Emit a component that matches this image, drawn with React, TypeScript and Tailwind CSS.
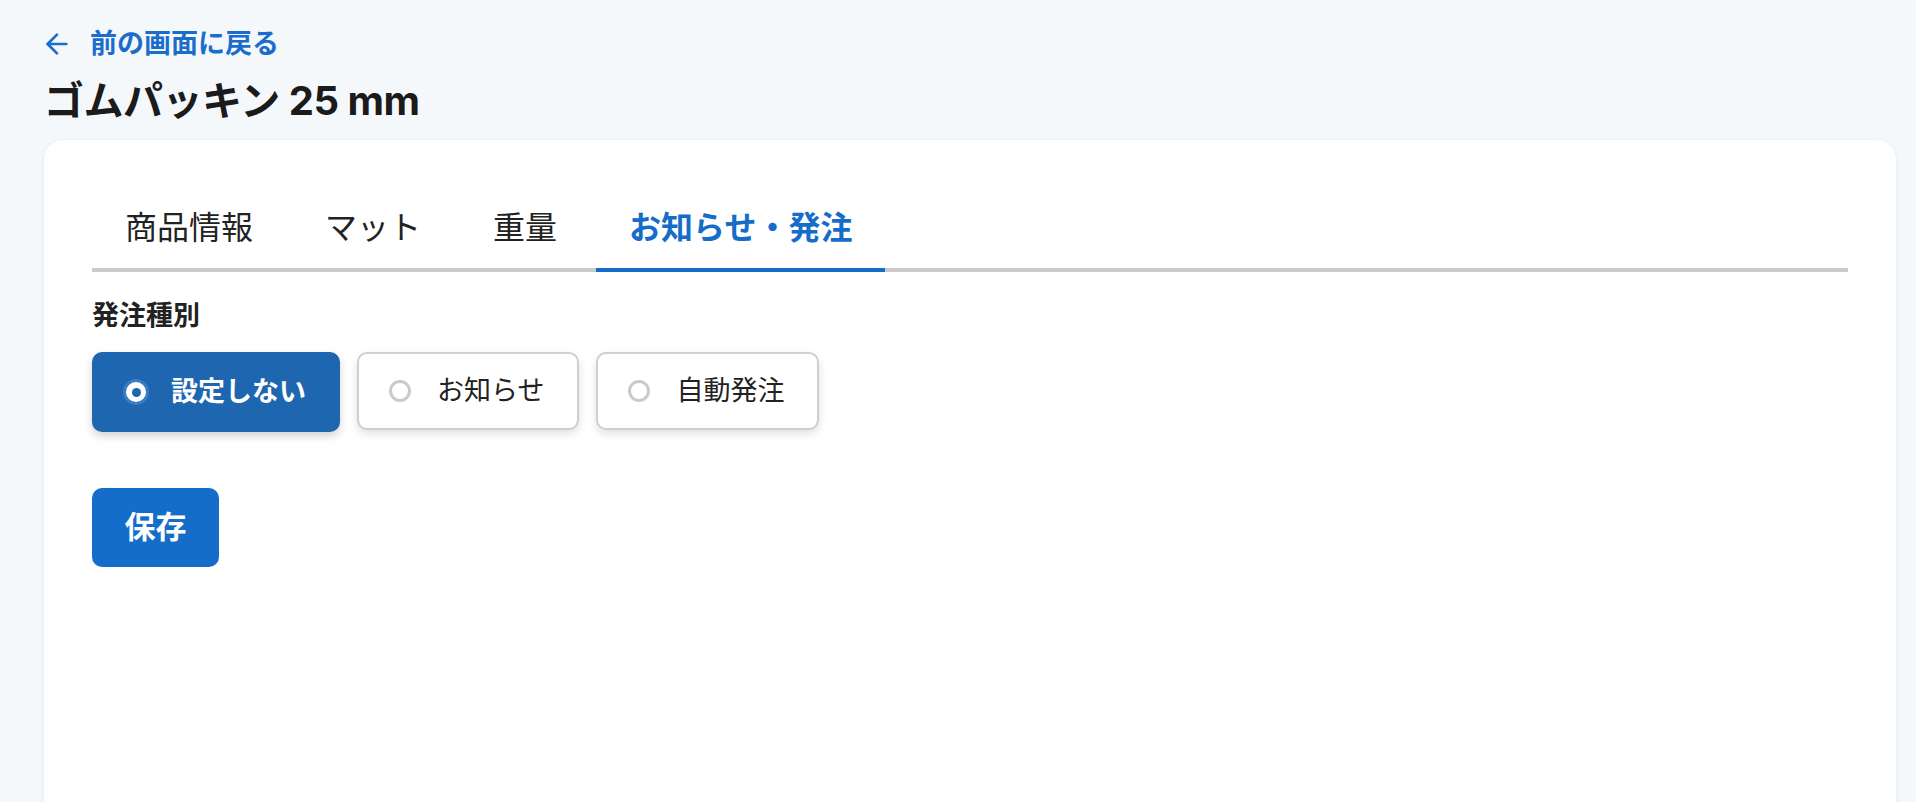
import { useState } from 'react'
import { ArrowLeft } from 'lucide-react'

const tabs = ['商品情報', 'マット', '重量', 'お知らせ・発注']
const kinds = ['設定しない', 'お知らせ', '自動発注']

function Radio({ checked }: { checked: boolean }) {
  if (checked) {
    return (
      <span className="flex h-[26px] w-[26px] items-center justify-center rounded-full bg-[#3c7cc4]">
        <span className="flex h-[20px] w-[20px] items-center justify-center rounded-full bg-white">
          <span className="h-[9px] w-[9px] rounded-full bg-[#1f66b0]" />
        </span>
      </span>
    )
  }
  return (
    <span className="flex h-[26px] w-[26px] items-center justify-center">
      <span className="h-[22px] w-[22px] rounded-full border-[3.5px] border-[#cacaca]" />
    </span>
  )
}

export default function App() {
  const [tab, setTab] = useState(3)
  const [kind, setKind] = useState(0)

  return (
    <div className="min-h-screen bg-[#f5f8fb] pl-[44px] pr-[20px] pt-[26px] font-['Inter','Noto_Sans_CJK_JP',sans-serif] text-[#1c1c1c]">
      <a href="#" className="flex h-[36px] items-center gap-[17px] text-[27px] font-bold leading-[36px] text-[#1a6dca]">
        <ArrowLeft size={32} strokeWidth={2} className="-ml-[3px]" />
        <span>前の画面に戻る</span>
      </a>
      <h1 className="mt-[15px] text-[40px] font-bold leading-[48px] tracking-[-0.5px] text-[#1b1b1b]">
        ゴムパッキン 25 mm
      </h1>

      <div className="mt-[15px] min-h-[700px] rounded-[20px] bg-white px-12 pt-[48px] shadow-[0_1px_4px_rgba(0,0,0,0.08)]">
        <div className="flex gap-[6px] border-b-4 border-[#cbcbcb]">
          {tabs.map((t, i) => (
            <button
              key={t}
              onClick={() => setTab(i)}
              className={
                i === tab
                  ? '-mb-[4px] border-b-4 border-[#156dc9] px-[33px] pt-[20px] pb-[20px] text-[32px] font-bold leading-[40px] text-[#156dc9]'
                  : 'px-[33px] pt-[20px] pb-[20px] text-[32px] font-normal leading-[40px] text-[#222]'
              }
            >
              {t}
            </button>
          ))}
        </div>

        <div className="mt-[26px] text-[27px] font-bold leading-[36px] text-[#222]">発注種別</div>

        <div className="mt-[18px] flex gap-[17px]">
          {kinds.map((k, i) => (
            <button
              key={k}
              onClick={() => setKind(i)}
              className={
                i === kind
                  ? 'flex h-[80px] items-center gap-[22px] rounded-[10px] bg-[#1f66b0] pl-[31px] pr-[34px] text-[27px] font-bold text-white shadow-[0_4px_8px_rgba(0,0,0,0.18)]'
                  : 'flex h-[78px] items-center gap-[24px] rounded-[10px] border-2 border-[#cfcfcf] bg-white pl-[28px] pr-[33px] text-[27px] font-normal text-[#222] shadow-[0_4px_8px_rgba(0,0,0,0.12)]'
              }
            >
              <Radio checked={i === kind} />
              <span>{k}</span>
            </button>
          ))}
        </div>

        <button className="mt-[56px] flex h-[79px] w-[127px] items-center justify-center rounded-[10px] bg-[#136dc9] text-[31px] font-bold text-white">
          保存
        </button>
      </div>
    </div>
  )
}
